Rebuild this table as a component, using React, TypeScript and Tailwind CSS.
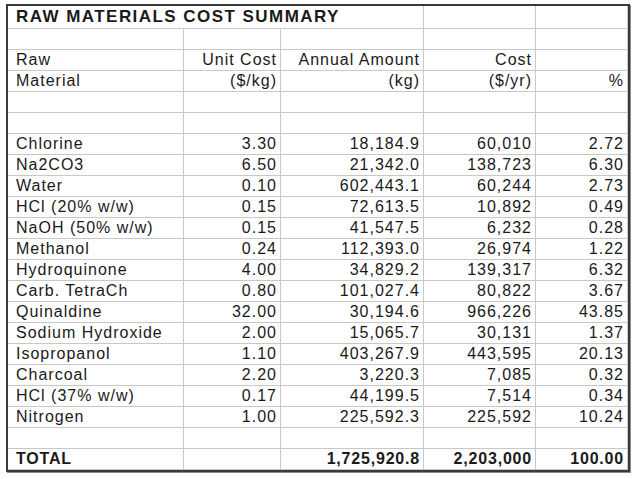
type Row = [string, string, string, string, string];

const headRows: Row[] = [
  ["", "", "", "", ""],
  ["Raw", "Unit Cost", "Annual Amount", "Cost", ""],
  ["Material", "($/kg)", "(kg)", "($/yr)", "%"],
  ["", "", "", "", ""],
  ["", "", "", "", ""],
];

const materials: Row[] = [
  ["Chlorine", "3.30", "18,184.9", "60,010", "2.72"],
  ["Na2CO3", "6.50", "21,342.0", "138,723", "6.30"],
  ["Water", "0.10", "602,443.1", "60,244", "2.73"],
  ["HCl (20% w/w)", "0.15", "72,613.5", "10,892", "0.49"],
  ["NaOH (50% w/w)", "0.15", "41,547.5", "6,232", "0.28"],
  ["Methanol", "0.24", "112,393.0", "26,974", "1.22"],
  ["Hydroquinone", "4.00", "34,829.2", "139,317", "6.32"],
  ["Carb. TetraCh", "0.80", "101,027.4", "80,822", "3.67"],
  ["Quinaldine", "32.00", "30,194.6", "966,226", "43.85"],
  ["Sodium Hydroxide", "2.00", "15,065.7", "30,131", "1.37"],
  ["Isopropanol", "1.10", "403,267.9", "443,595", "20.13"],
  ["Charcoal", "2.20", "3,220.3", "7,085", "0.32"],
  ["HCl (37% w/w)", "0.17", "44,199.5", "7,514", "0.34"],
  ["Nitrogen", "1.00", "225,592.3", "225,592", "10.24"],
  ["", "", "", "", ""],
];

const cell =
  "h-[21px] border-b border-r border-[#c8c8c8] leading-[20px] whitespace-nowrap overflow-hidden";

function SheetRow({ row, bold }: { row: Row; bold?: boolean }) {
  const weight = bold ? "font-bold tracking-[0.8px]" : "tracking-[1px]";
  return (
    <>
      <div className={`${cell} ${weight} pl-[8px] text-left`}>{row[0]}</div>
      {row.slice(1).map((value, i) => (
        <div key={i} className={`${cell} ${weight} pr-[3px] text-right`}>
          {value}
        </div>
      ))}
    </>
  );
}

export default function App() {
  return (
    <div className="min-h-[479px] w-[638px] bg-white pl-[6px] pt-[4px] font-['Liberation_Sans',Arial,sans-serif] text-[16px] text-[#1a1a1a]">
      <div className="inline-block border-2 border-[#3a3a3a] shadow-[1px_1px_0_#8a8a8a]">
        <div className="grid grid-cols-[176px_97px_143px_112px_92px]">
          <div className="col-span-3 h-[23px] border-b border-r border-[#c8c8c8] pl-[8px] text-[17px] font-bold leading-[22px] tracking-[1.45px] whitespace-nowrap">
            RAW MATERIALS COST SUMMARY
          </div>
          <div className="h-[23px] border-b border-r border-[#c8c8c8]" />
          <div className="h-[23px] border-b border-r border-[#c8c8c8]" />

          {headRows.map((row, i) => (
            <SheetRow key={`h${i}`} row={row} />
          ))}
          {materials.map((row, i) => (
            <SheetRow key={`m${i}`} row={row} />
          ))}
          <SheetRow row={["TOTAL", "", "1,725,920.8", "2,203,000", "100.00"]} bold />
        </div>
      </div>
    </div>
  );
}
